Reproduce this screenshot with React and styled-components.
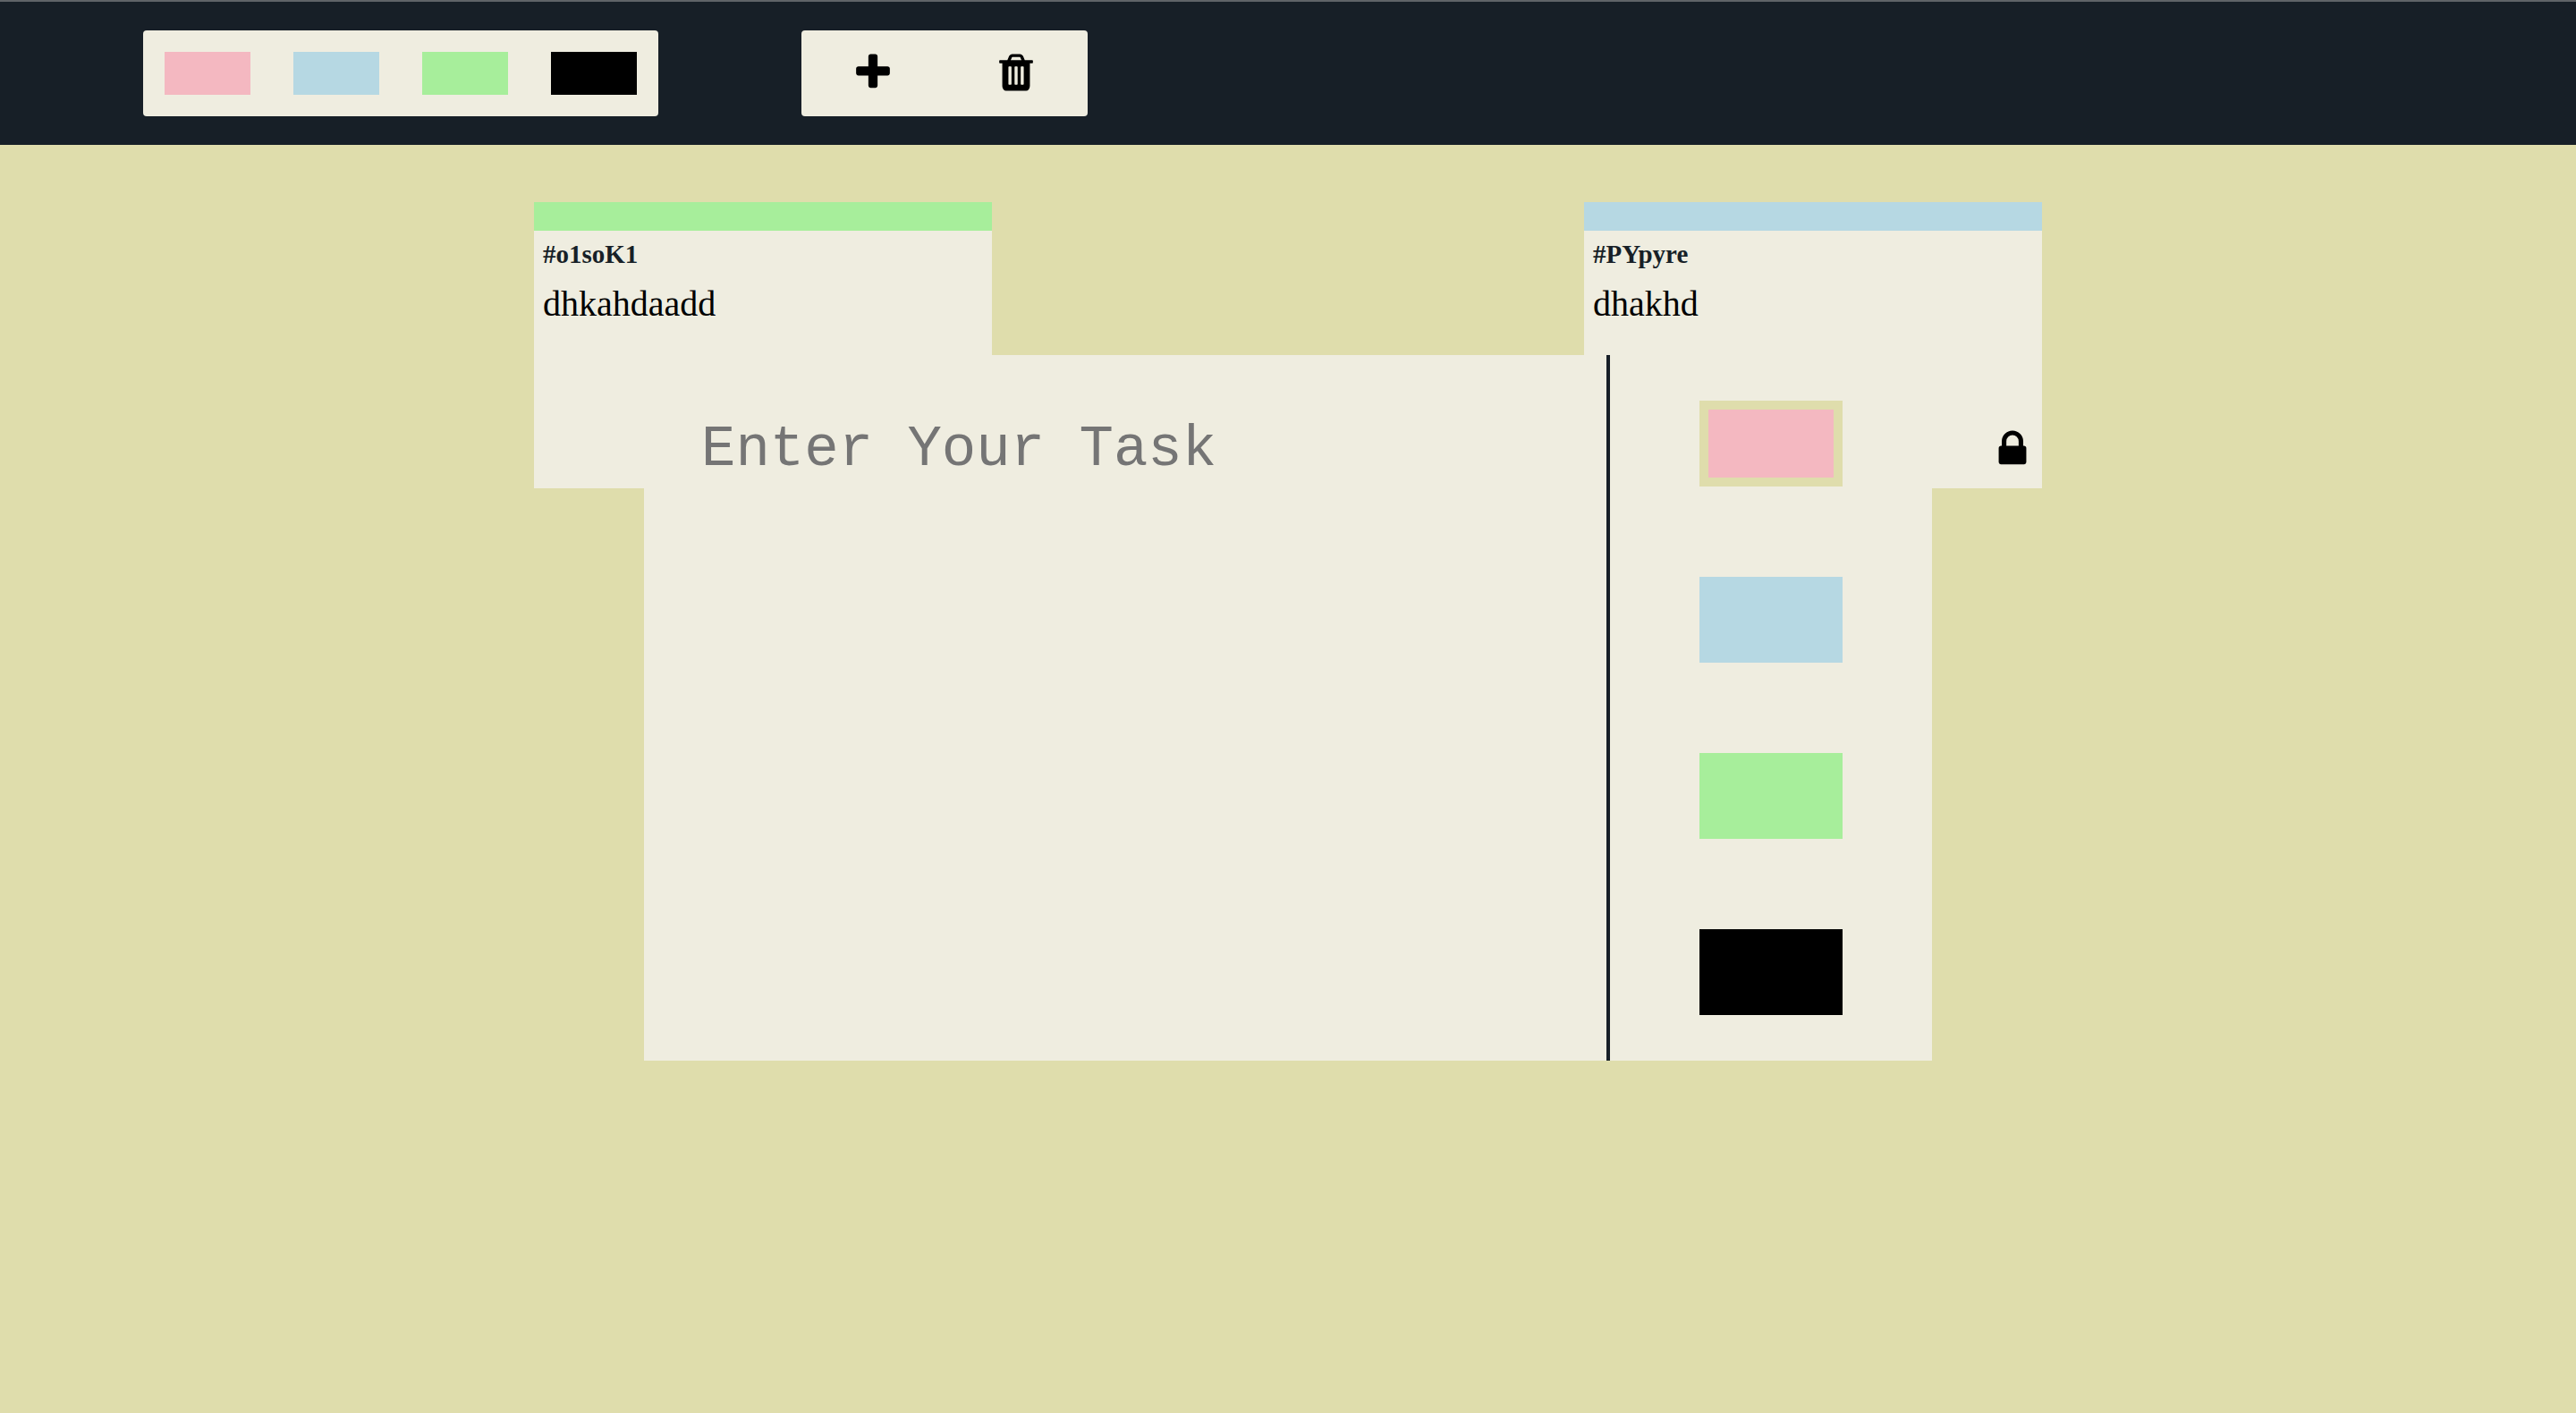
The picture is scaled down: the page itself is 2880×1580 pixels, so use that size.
import React, { useState } from "react";
import styled, { createGlobalStyle } from "styled-components";

const palette = {
  ink: "#171f27",
  cream: "#efede0",
  sand: "#dfddac",
  pink: "#f4b8c1",
  blue: "#b6d8e3",
  green: "#a7ee9b",
  black: "#000000",
};

const colors = ["pink", "blue", "green", "black"];

const GlobalStyle = createGlobalStyle`
  *, *::before, *::after { box-sizing: border-box; }
  body {
    margin: 0;
    min-height: 100vh;
    background: ${palette.sand};
    font-family: "Liberation Serif", "Times New Roman", serif;
  }
  button { padding: 0; border: 0; font: inherit; color: inherit; cursor: pointer; }
`;

const Toolbar = styled.header`
  display: flex;
  align-items: center;
  gap: 160px;
  padding: 32px 160px;
  border-top: 2px solid #5f6367;
  background: ${palette.ink};
`;

const ToolGroup = styled.div`
  display: flex;
  align-items: center;
  justify-content: space-around;
  width: ${(p) => p.$width};
  height: 96px;
  border-radius: 4px;
  background: ${palette.cream};
`;

const FilterSwatch = styled.button`
  width: 96px;
  height: 48px;
  background: ${(p) => palette[p.$color]};
`;

const IconButton = styled.button`
  display: flex;
  padding-bottom: 2px;
  background: transparent;
`;

const Glyph = styled.svg`
  display: block;
  width: 48px;
  height: 48px;
  fill: ${palette.black};
`;

const Board = styled.main`
  display: flex;
  justify-content: space-around;
  padding: 64px 266px;
`;

const Ticket = styled.article`
  display: flex;
  flex-direction: column;
  width: 512px;
  height: 320px;
  background: ${palette.cream};
`;

const TicketBar = styled.div`
  height: 32px;
  background: ${(p) => palette[p.$color]};
`;

const TicketId = styled.h2`
  margin: 0;
  padding: 8px 10px 0;
  color: ${palette.ink};
  font-size: 29px;
  line-height: 36px;
`;

const TicketTask = styled.p`
  margin: 0;
  padding: 14px 10px 0;
  color: ${palette.black};
  font-size: 40px;
  line-height: 48px;
`;

const TicketFooter = styled.footer`
  display: flex;
  justify-content: flex-end;
  margin-top: auto;
  padding: 0 9px 18px;
`;

const Modal = styled.form`
  position: fixed;
  top: 397px;
  left: 25%;
  display: flex;
  width: 50%;
  height: 789px;
  background: ${palette.cream};
`;

const TaskInput = styled.textarea`
  width: 75%;
  padding: 66px 64px;
  border: 0;
  border-right: 4px solid ${palette.ink};
  outline: 0;
  resize: none;
  background: transparent;
  font-family: "Liberation Mono", "Courier New", monospace;
  font-size: 64px;
  line-height: 80px;

  &::placeholder { color: #757575; opacity: 1; }
`;

const PriorityColumn = styled.div`
  display: flex;
  flex-direction: column;
  align-items: center;
  justify-content: space-around;
  width: 25%;
`;

const PriorityOption = styled.input`
  appearance: none;
  width: 160px;
  height: 96px;
  margin: 0;
  background: ${(p) => palette[p.$color]};
  cursor: pointer;

  &:checked { border: 10px solid ${palette.sand}; }
`;

const PlusIcon = () => (
  <Glyph viewBox="0 0 1792 1792" aria-hidden="true">
    <path d="M1600 736v192q0 40-28 68t-68 28h-416v416q0 40-28 68t-68 28h-192q-40 0-68-28t-28-68v-416h-416q-40 0-68-28t-28-68v-192q0-40 28-68t68-28h416v-416q0-40 28-68t68-28h192q40 0 68 28t28 68v416h416q40 0 68 28t28 68z" />
  </Glyph>
);

const TrashIcon = () => (
  <Glyph viewBox="0 0 1792 1792" aria-hidden="true">
    <path d="M704 1376v-704q0-14-9-23t-23-9h-64q-14 0-23 9t-9 23v704q0 14 9 23t23 9h64q14 0 23-9t9-23zm256 0v-704q0-14-9-23t-23-9h-64q-14 0-23 9t-9 23v704q0 14 9 23t23 9h64q14 0 23-9t9-23zm256 0v-704q0-14-9-23t-23-9h-64q-14 0-23 9t-9 23v704q0 14 9 23t23 9h64q14 0 23-9t9-23zm-544-992h448l-48-117q-7-9-17-11h-317q-10 2-17 11zm928 32v64q0 14-9 23t-23 9h-96v948q0 83-47 143.5t-113 60.5h-832q-66 0-113-58.5t-47-141.5v-952h-96q-14 0-23-9t-9-23v-64q0-14 9-23t23-9h309l70-167q15-37 54-63t79-26h320q40 0 79 26t54 63l70 167h309q14 0 23 9t9 23z" />
  </Glyph>
);

const LockIcon = () => (
  <Glyph viewBox="0 0 1792 1792" aria-hidden="true">
    <path d="M640 768h512v-192q0-106-75-181t-181-75-181 75-75 181v192zm832 96v576q0 40-28 68t-68 28h-960q-40 0-68-28t-28-68v-576q0-40 28-68t68-28h32v-192q0-184 132-316t316-132 316 132 132 316v192h32q40 0 68 28t28 68z" />
  </Glyph>
);

const tickets = [
  { id: "#o1soK1", task: "dhkahdaadd", color: "green" },
  { id: "#PYpyre", task: "dhakhd", color: "blue" },
];

export default function App() {
  const [priority, setPriority] = useState("pink");
  const [draft, setDraft] = useState("");

  return (
    <>
      <GlobalStyle />
      <Toolbar>
        <ToolGroup $width="576px">
          {colors.map((c) => (
            <FilterSwatch key={c} type="button" $color={c} aria-label={`Filter ${c}`} />
          ))}
        </ToolGroup>
        <ToolGroup $width="320px">
          <IconButton type="button" aria-label="Add task"><PlusIcon /></IconButton>
          <IconButton type="button" aria-label="Delete task"><TrashIcon /></IconButton>
        </ToolGroup>
      </Toolbar>
      <Board>
        {tickets.map((t) => (
          <Ticket key={t.id}>
            <TicketBar $color={t.color} />
            <TicketId>{t.id}</TicketId>
            <TicketTask>{t.task}</TicketTask>
            <TicketFooter>
              <IconButton type="button" aria-label="Unlock task"><LockIcon /></IconButton>
            </TicketFooter>
          </Ticket>
        ))}
      </Board>
      <Modal>
        <TaskInput
          aria-label="Task"
          placeholder="Enter Your Task"
          value={draft}
          onChange={(e) => setDraft(e.target.value)}
        />
        <PriorityColumn role="radiogroup" aria-label="Priority">
          {colors.map((c) => (
            <PriorityOption
              key={c}
              type="radio"
              name="priority"
              aria-label={c}
              $color={c}
              checked={priority === c}
              onChange={() => setPriority(c)}
            />
          ))}
        </PriorityColumn>
      </Modal>
    </>
  );
}
